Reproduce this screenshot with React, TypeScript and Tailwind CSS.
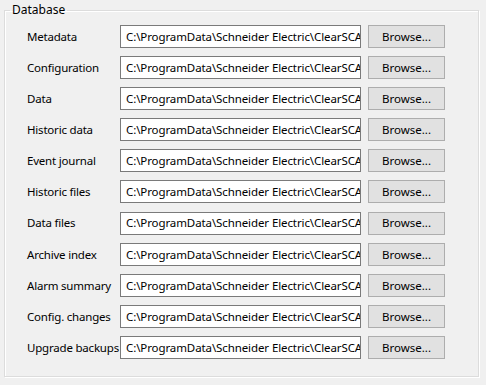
const rows = [
  'Metadata',
  'Configuration',
  'Data',
  'Historic data',
  'Event journal',
  'Historic files',
  'Data files',
  'Archive index',
  'Alarm summary',
  'Config. changes',
  'Upgrade backups',
];

const path = 'C:\\ProgramData\\Schneider Electric\\ClearSCADA';

export default function App() {
  return (
    <div
      className="w-[486px] h-[385px] bg-[#f0f0f0] text-[11.5px] text-black pt-[3px] pl-[4px] pr-[7px]"
      style={{ fontFamily: '"Segoe UI", "Noto Sans", "Open Sans", sans-serif' }}
    >
      {/* Group box */}
      <fieldset className="border border-[#dcdcdc] shadow-[inset_1px_1px_0_#ffffff,1px_1px_0_#ffffff] h-[374px] m-0 pl-[22px] pt-[8px] pr-0 pb-0">
        <legend className="ml-[-17px] px-[2px] leading-[14px] text-[12px]">Database</legend>
        <div className="flex flex-col gap-[8.1px]">
          {rows.map((label) => (
            <div key={label} className="flex items-center h-[23px]">
              <span className="w-[93px] whitespace-nowrap tracking-[-0.2px]">{label}</span>
              <div className="w-[241px] h-[23px] bg-white border border-[#7a7a7a] pl-[5px] flex items-center overflow-hidden whitespace-nowrap tracking-[-0.1px]">
                {path}
              </div>
              <button className="ml-[7px] w-[77px] h-[23px] bg-[#e1e1e1] border border-[#adadad] flex items-center justify-center">
                Browse...
              </button>
            </div>
          ))}
        </div>
      </fieldset>
    </div>
  );
}
